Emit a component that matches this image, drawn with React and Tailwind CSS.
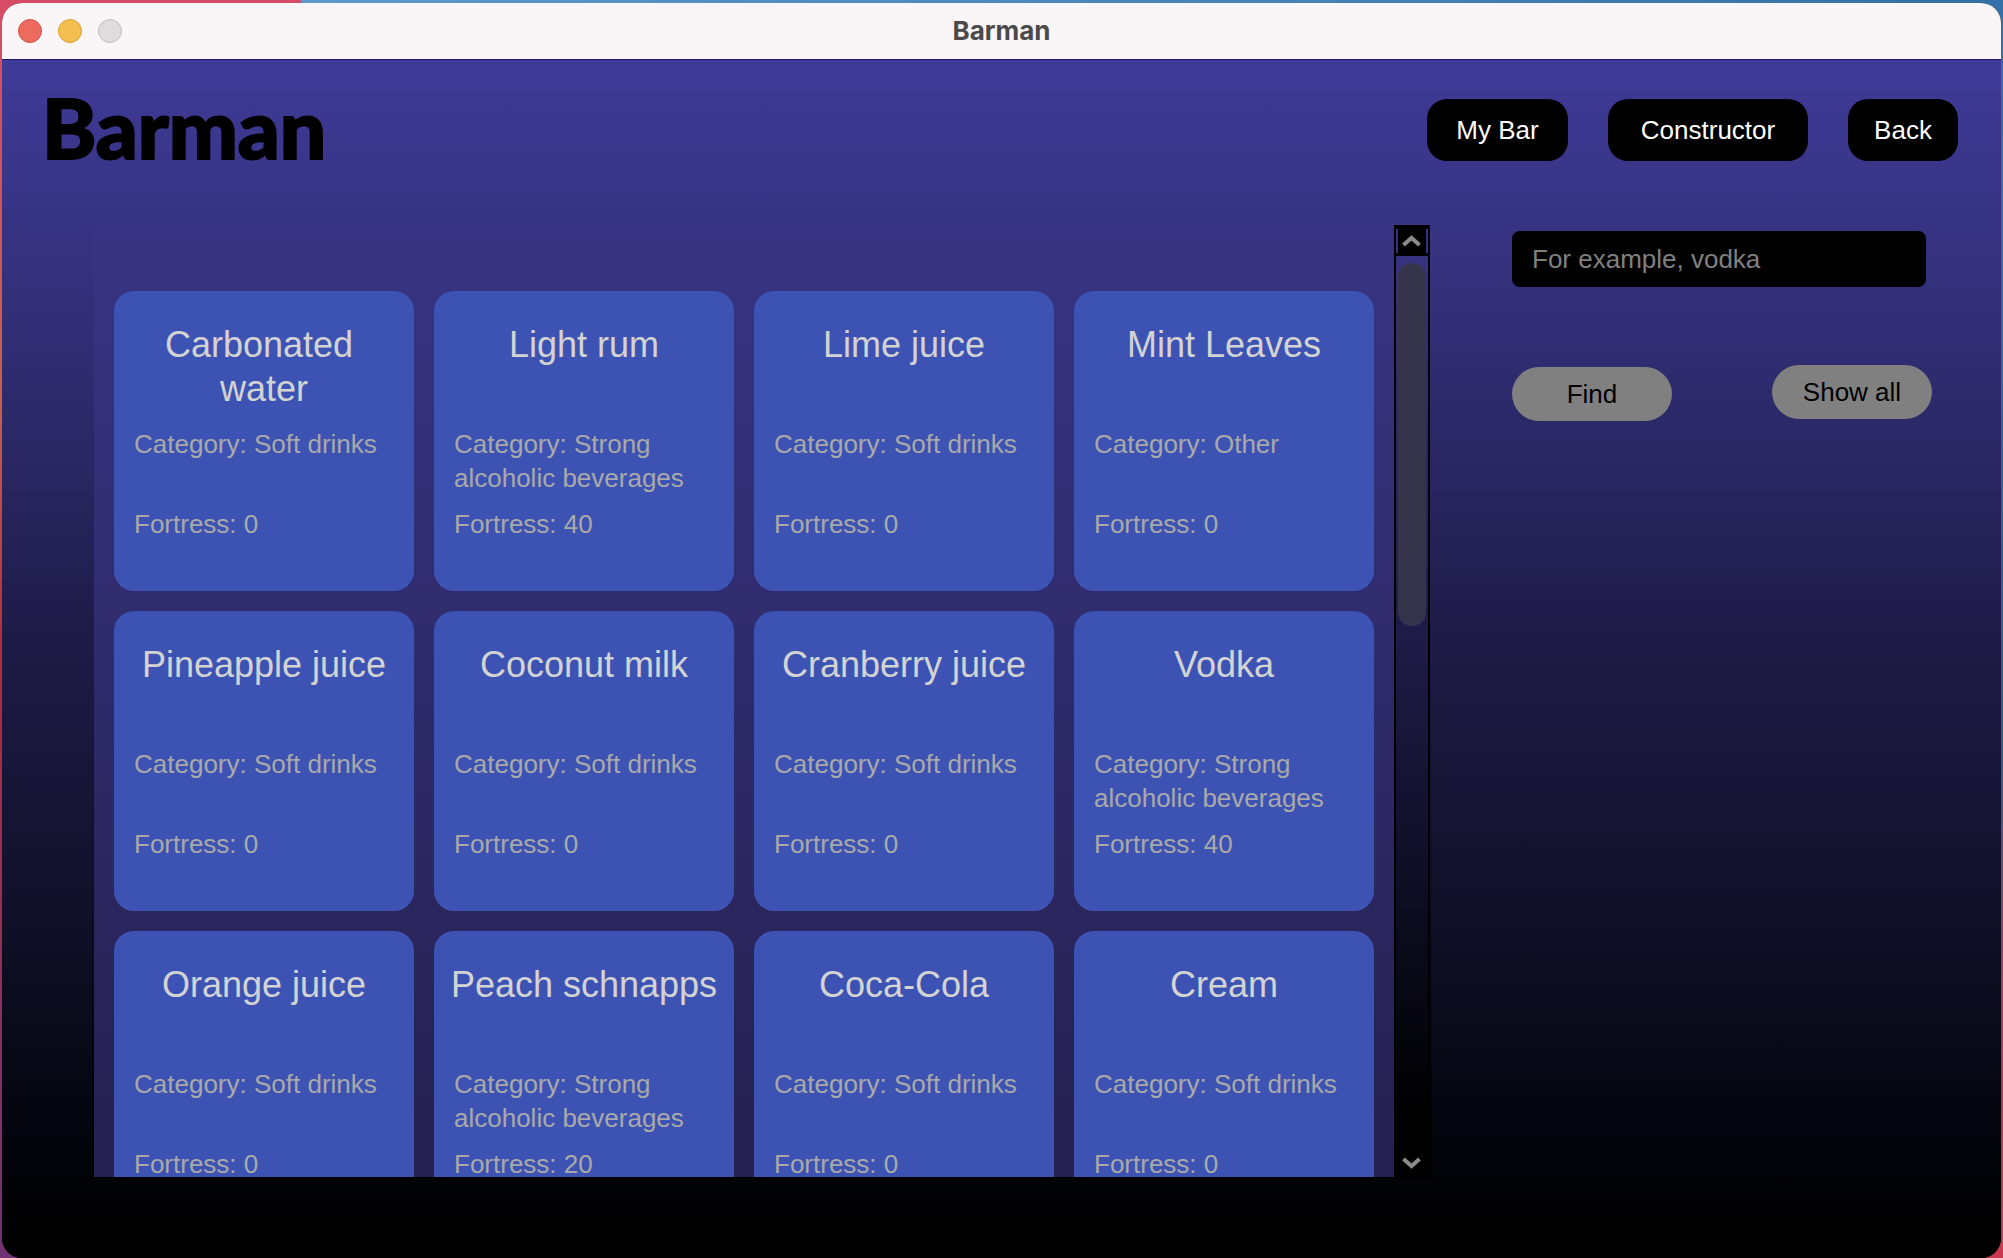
import React from "react";

const SOFT = "Soft drinks";
const STRONG = "Strong alcoholic beverages";

const ingredients = [
  { name: "Carbonated water", category: SOFT, fortress: 0 },
  { name: "Light rum", category: STRONG, fortress: 40 },
  { name: "Lime juice", category: SOFT, fortress: 0 },
  { name: "Mint Leaves", category: "Other", fortress: 0 },
  { name: "Pineapple juice", category: SOFT, fortress: 0 },
  { name: "Coconut milk", category: SOFT, fortress: 0 },
  { name: "Cranberry juice", category: SOFT, fortress: 0 },
  { name: "Vodka", category: STRONG, fortress: 40 },
  { name: "Orange juice", category: SOFT, fortress: 0 },
  { name: "Peach schnapps", category: STRONG, fortress: 20 },
  { name: "Coca-Cola", category: SOFT, fortress: 0 },
  { name: "Cream", category: SOFT, fortress: 0 },
];

function TitleBar() {
  return (
    <div className="grid h-14 shrink-0 grid-cols-[1fr_auto_1fr] items-center bg-[#faf6f7] px-4">
      <div className="flex gap-4">
        <button aria-label="Close" className="size-6 rounded-full border border-[#d3504a] bg-[#ec6a5e]" />
        <button aria-label="Minimize" className="size-6 rounded-full border border-[#d6a036] bg-[#f4bf4f]" />
        <button aria-label="Zoom" className="size-6 rounded-full border border-[#c0bcbd] bg-[#dfdcdd]" />
      </div>
      <div className="font-[Inter,sans-serif] text-[26px] leading-8 font-bold text-[#4b494a]">Barman</div>
    </div>
  );
}

function Header() {
  return (
    <header className="flex shrink-0 items-start justify-between pt-[39px] pr-[43px] pb-[62px] pl-10">
      <h1 className="font-['Comic_Sans_MS',Lato,sans-serif] text-[82px] leading-14 font-black text-black [-webkit-text-stroke:2px_black]">
        Barman
      </h1>
      <nav className="flex gap-10 text-white">
        <button className="h-[62px] w-[141px] rounded-[20px] bg-black">My Bar</button>
        <button className="h-[62px] w-[200px] rounded-[20px] bg-black">Constructor</button>
        <button className="h-[62px] w-[110px] rounded-[20px] bg-black">Back</button>
      </nav>
    </header>
  );
}

function Card({ item }) {
  return (
    <article className="aspect-square rounded-[20px] bg-[#3d53b3] text-[#a9a9a9]">
      <h2 className="mt-8 h-[104px] px-3 text-center text-[36px] leading-11 whitespace-break-spaces text-[#d3d3d3]">
        {item.name}
      </h2>
      <p className="h-20 px-5 leading-[34px]">{`Category: ${item.category}`}</p>
      <p className="px-5 leading-[34px]">{`Fortress: ${item.fortress}`}</p>
    </article>
  );
}

function Arrow({ d }) {
  return (
    <svg viewBox="0 0 20 12" className="h-3 w-5" fill="none" stroke="#8c8c8c" strokeWidth="4">
      <path d={d} />
    </svg>
  );
}

function ScrollBar() {
  return (
    <div className="flex w-9 shrink-0 flex-col border-x-2 border-black">
      <button aria-label="Scroll up" className="flex h-[31px] shrink-0 items-center justify-center bg-black">
        <span className="flex h-6 w-full items-center justify-center border-x-2 border-[#37337f]">
          <Arrow d="M1.5 10 L9.5 3 L17.5 10" />
        </span>
      </button>
      <div className="flex-1 px-0.5 pt-[7px]">
        <div className="h-[41%] rounded-full bg-[#35344b]" />
      </div>
      <button aria-label="Scroll down" className="flex h-7 shrink-0 items-center justify-center bg-black">
        <Arrow d="M1.5 2 L9.5 9 L17.5 2" />
      </button>
    </div>
  );
}

export default function App() {
  return (
    <div className="h-screen bg-[linear-gradient(180deg,#3470a8_0%,#2c5f86_60%,#b8354a_80%,#c8384e_100%)] font-['Liberation_Sans',Arial,sans-serif] text-[26px]">
      <div className="h-full bg-[linear-gradient(180deg,#d84b66_0%,#c4604c_32%,#b02c3c_52%,#6f3274_100%),linear-gradient(90deg,#d84b66_300px,#5c9acb_302px,#3470a8_100%)] bg-[length:20px_100%,100%_20px] bg-no-repeat px-0.5 pt-[3px]">
        <div className="flex h-full flex-col overflow-hidden rounded-[20px] bg-black">
          <TitleBar />
          <div className="flex min-h-0 flex-1 flex-col border-t border-[#1b1765] bg-[linear-gradient(180deg,#3f3b98_0%,#2b2866_32%,#1e1b47_48%,#11112a_70%,#04050e_89%,#000_98%)]">
            <Header />
            <main className="flex min-h-0 flex-1 gap-20 pr-[69px] pb-[79px] pl-[90px]">
              <section
                aria-label="Ingredients"
                className="flex min-w-0 flex-1 bg-[linear-gradient(180deg,#393585_0%,#1f1c4a_42%,#000_94%)] p-0.5"
              >
                <div className="grid min-w-0 flex-1 auto-rows-max grid-cols-4 gap-5 overflow-y-auto bg-[linear-gradient(180deg,#383483_0%,#25204f_100%)] px-5 pt-[66px] [scrollbar-width:none]">
                  {ingredients.map((item) => (
                    <Card key={item.name} item={item} />
                  ))}
                </div>
                <ScrollBar />
              </section>
              <aside className="w-[420px] shrink-0 pt-2">
                <form onSubmit={(e) => e.preventDefault()}>
                  <input
                    type="text"
                    aria-label="Search ingredient"
                    placeholder="For example, vodka"
                    className="h-14 w-[414px] rounded-lg bg-black px-5 text-white placeholder:text-[#808080]"
                  />
                  <div className="mt-[78px] flex justify-between text-black">
                    <button type="submit" className="mt-0.5 h-[54px] w-40 rounded-full bg-[#808080]">
                      Find
                    </button>
                    <button type="button" className="mb-0.5 h-[54px] w-40 rounded-full bg-[#808080]">
                      Show all
                    </button>
                  </div>
                </form>
              </aside>
            </main>
          </div>
        </div>
      </div>
    </div>
  );
}
